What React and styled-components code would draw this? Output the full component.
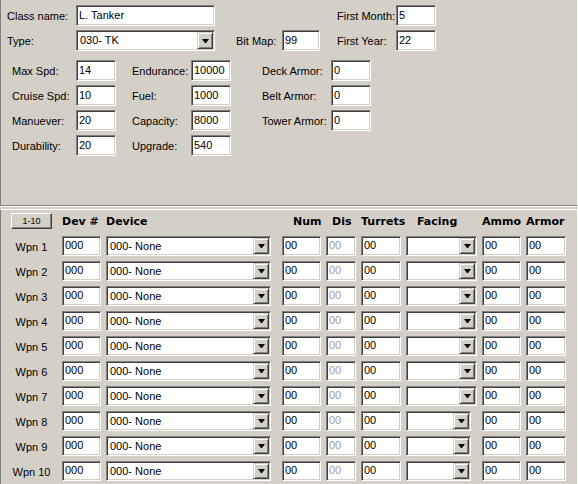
import React from 'react'
import styled, { createGlobalStyle } from 'styled-components'

const face = '#d4d0c8'
const shadow = '#808080'
const dark = '#404040'

const weapons = Array.from({ length: 10 }, (_, i) => ({
    name: `Wpn ${i + 1}`,
    // the last three rows have a slightly narrower facing box
    facingWidth: i >= 7 ? 65 : 71,
}))

const App = () => (
    <Window>
        <GlobalStyle />
        <ClassPanel>
            <FormRow $indent={6}>
                <Field>
                    <Label $w={69}>Class name:</Label>
                    <Edit $w={139} $h={21} defaultValue="L. Tanker" />
                </Field>
                <Field $before={122}>
                    <Label $w={59}>First Month:</Label>
                    <Edit $w={40} $h={21} defaultValue="5" />
                </Field>
            </FormRow>
            <FormRow $indent={6} $top={4}>
                <Field>
                    <Label $w={69}>Type:</Label>
                    <Combo width={139} height={21} value="030- TK" />
                </Field>
                <Field $before={21}>
                    <Label $w={46}>Bit Map:</Label>
                    <Edit $w={38} $h={21} defaultValue="99" />
                </Field>
                <Field $before={17}>
                    <Label $w={59}>First Year:</Label>
                    <Edit $w={40} $h={21} defaultValue="22" />
                </Field>
            </FormRow>
            <StatsBlock>
                <StatColumn>
                    <Stat label="Max Spd:" labelWidth={64} value="14" />
                    <Stat label="Cruise Spd:" labelWidth={64} value="10" />
                    <Stat label="Manuever:" labelWidth={64} value="20" />
                    <Stat label="Durability:" labelWidth={64} value="20" />
                </StatColumn>
                <StatColumn $before={16}>
                    <Stat label="Endurance:" labelWidth={59} value="10000" />
                    <Stat label="Fuel:" labelWidth={59} value="1000" />
                    <Stat label="Capacity:" labelWidth={59} value="8000" />
                    <Stat label="Upgrade:" labelWidth={59} value="540" />
                </StatColumn>
                <StatColumn $before={31}>
                    <Stat label="Deck Armor:" labelWidth={69} value="0" />
                    <Stat label="Belt Armor:" labelWidth={69} value="0" />
                    <Stat label="Tower Armor:" labelWidth={69} value="0" />
                </StatColumn>
            </StatsBlock>
        </ClassPanel>

        <WeaponPanel>
            <WeaponGrid>
                <PageButton>1-10</PageButton>
                <Heading>Dev #</Heading>
                <Heading>Device</Heading>
                <Heading $indent={11}>Num</Heading>
                <Heading $indent={6}>Dis</Heading>
                <Heading>Turrets</Heading>
                <Heading $indent={11}>Facing</Heading>
                <Heading>Ammo</Heading>
                <Heading>Armor</Heading>
            </WeaponGrid>
            <WeaponRows>
                {weapons.map(w => (
                    <WeaponGrid key={w.name} $row>
                        <RowLabel>{w.name}</RowLabel>
                        <Edit $w={39} defaultValue="000" />
                        <Combo width={165} height={20} value="000- None" />
                        <Edit $w={39} defaultValue="00" />
                        <Edit $w={30} $dim defaultValue="00" />
                        <Edit $w={40} defaultValue="00" />
                        <Combo width={w.facingWidth} height={20} value="" />
                        <Edit $w={39} defaultValue="00" />
                        <Edit $w={40} defaultValue="00" />
                    </WeaponGrid>
                ))}
            </WeaponRows>
        </WeaponPanel>
    </Window>
)

const Stat = ({ label, labelWidth, value }) => (
    <Field>
        <Label $w={labelWidth}>{label}</Label>
        <Edit $w={40} $h={21} defaultValue={value} />
    </Field>
)

const Combo = ({ width, height, value }) => (
    <ComboBox style={{ width, height }}>
        <ComboText>{value}</ComboText>
        <DropButton />
    </ComboBox>
)

// style
const GlobalStyle = createGlobalStyle`
    html, body {
        margin: 0;
        padding: 0;
        background: ${face};
    }
    body {
        font-family: "Liberation Sans", Arial, sans-serif;
        font-size: 11px;
        color: #000;
    }
`

const Window = styled.div`
    display: flex;
    flex-direction: column;
    width: 578px;
    height: 484px;
    overflow: hidden;
    background: ${face};
`

const ClassPanel = styled.section`
    display: flex;
    flex-direction: column;
    box-sizing: border-box;
    height: 206px;
    padding-top: 5px;
    border-left: 1px solid ${shadow};
    border-right: 1px solid #fff;
    border-bottom: 1px solid ${shadow};
    box-shadow: 0 1px 0 #fff;
`

const FormRow = styled.div`
    display: flex;
    align-items: center;
    padding-left: ${p => p.$indent || 0}px;
    margin-top: ${p => p.$top || 0}px;
`

const Field = styled.div`
    display: flex;
    align-items: center;
    margin-left: ${p => p.$before || 0}px;
`

const Label = styled.span`
    flex: none;
    width: ${p => p.$w}px;
    padding-top: 1px;
    white-space: nowrap;
`

const Edit = styled.input.attrs({ readOnly: true, type: 'text' })`
    box-sizing: border-box;
    width: ${p => p.$w}px;
    height: ${p => p.$h || 20}px;
    margin: 0;
    padding: 0 2px 2px;
    font: 11px "Liberation Sans", Arial, sans-serif;
    color: ${p => p.$dim ? '#a0a0a0' : '#000'};
    background: #fff;
    border: 1px solid;
    border-color: ${shadow} #fff #fff ${shadow};
    box-shadow: inset 1px 1px 0 ${dark}, inset -1px -1px 0 ${face};
    outline: none;
    border-radius: 0;
`

const ComboBox = styled.div`
    display: flex;
    box-sizing: border-box;
    padding: 1px;
    background: #fff;
    border: 1px solid;
    border-color: ${shadow} #fff #fff ${shadow};
    box-shadow: inset 1px 1px 0 ${dark}, inset -1px -1px 0 ${face};
`

const ComboText = styled.span`
    display: flex;
    align-items: center;
    flex: 1;
    min-width: 0;
    padding: 0 0 1px 2px;
    white-space: nowrap;
    overflow: hidden;
`

const DropButton = styled.span`
    display: flex;
    align-items: center;
    justify-content: center;
    flex: none;
    box-sizing: border-box;
    width: 16px;
    background: ${face};
    border: 1px solid;
    border-color: ${face} ${dark} ${dark} ${face};
    box-shadow: inset 1px 1px 0 #fff, inset -1px -1px 0 ${shadow};

    &::after {
        content: '';
        width: 1px;
        height: 0;
        border-left: 3px solid transparent;
        border-right: 3px solid transparent;
        border-top: 4px solid #000;
    }
`

const StatsBlock = styled.div`
    display: flex;
    margin-top: 9px;
    padding-left: 11px;
`

const StatColumn = styled.div`
    display: flex;
    flex-direction: column;
    gap: 4px;
    margin-left: ${p => p.$before || 0}px;
`

const WeaponPanel = styled.section`
    flex: 1;
    margin-top: 3px;
    padding-top: 3px;
    border-top: 1px solid #fff;
    border-left: 1px solid ${shadow};
    border-right: 1px solid #fff;
`

const WeaponGrid = styled.div`
    display: grid;
    grid-template-columns: 61px 44px 176px 44px 35px 45px 76px 44px 40px;
    align-items: center;
    height: ${p => p.$row ? 20 : 16}px;
`

const WeaponRows = styled.div`
    display: flex;
    flex-direction: column;
    gap: 5px;
    margin-top: 7px;
`

const Heading = styled.span`
    padding-left: ${p => p.$indent || 0}px;
    font: bold 11px "DejaVu Sans", Verdana, sans-serif;
    white-space: nowrap;
`

const RowLabel = styled.span`
    text-align: center;
    padding-top: 1px;
`

const PageButton = styled.button`
    justify-self: center;
    box-sizing: border-box;
    width: 41px;
    height: 16px;
    padding: 0;
    font: 9px "Liberation Sans", Arial, sans-serif;
    color: #000;
    background: ${face};
    border: 1px solid;
    border-color: #fff ${dark} ${dark} #fff;
    box-shadow: inset -1px -1px 0 ${shadow};
    border-radius: 0;
`

export default App
